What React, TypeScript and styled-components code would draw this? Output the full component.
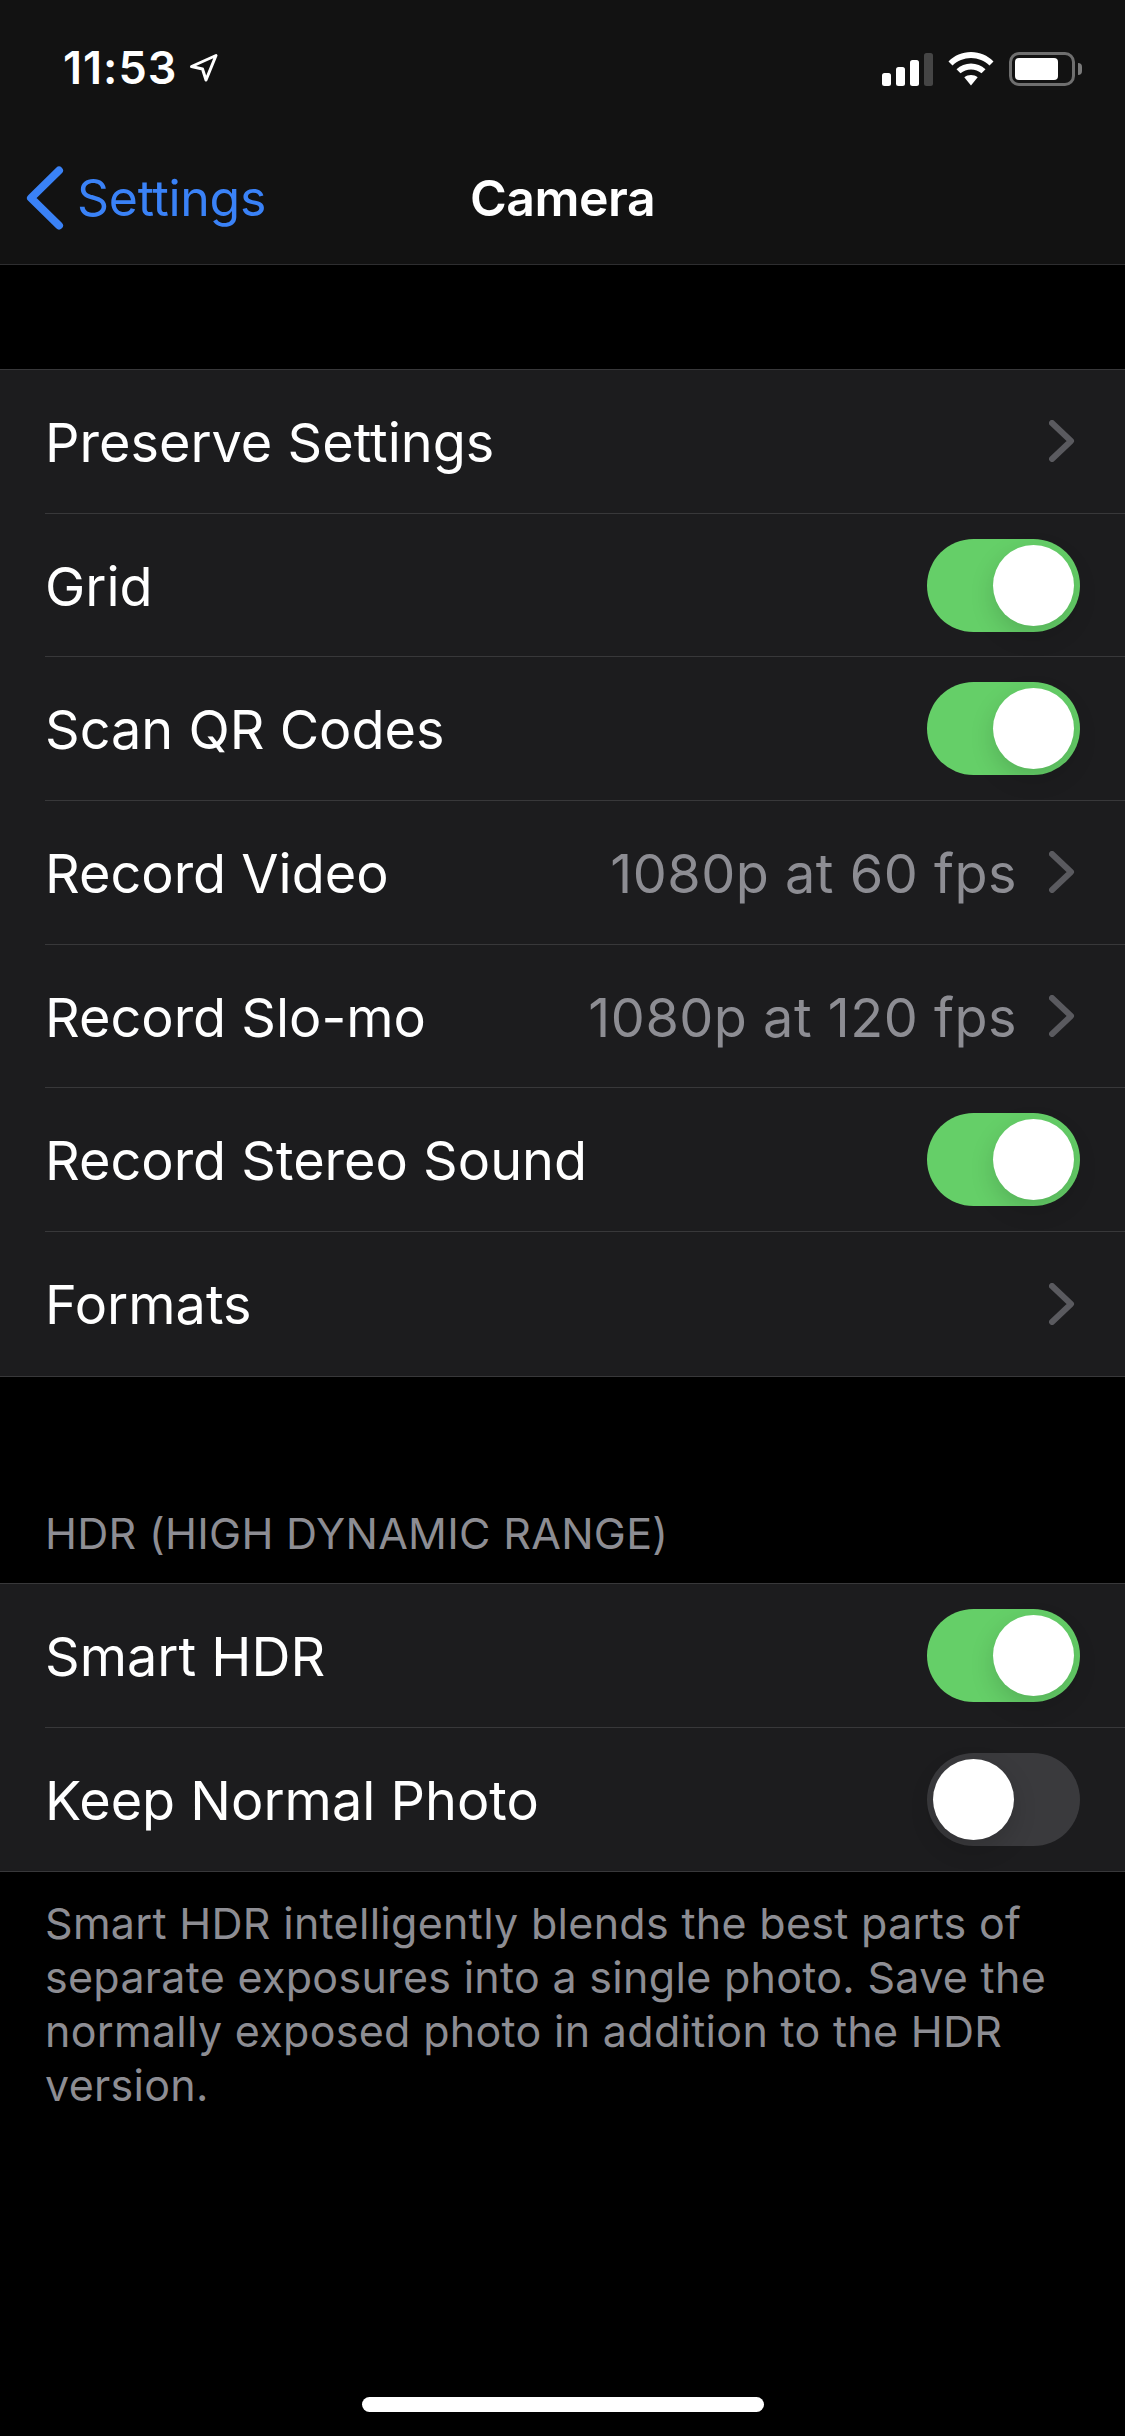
import React from 'react';
import styled, { createGlobalStyle } from 'styled-components';

const GlobalStyle = createGlobalStyle`
  html, body {
    margin: 0;
    padding: 0;
    background: #000;
  }
  * {
    box-sizing: border-box;
  }
`;

const Toggle: React.FC<{ on?: boolean }> = ({ on }) => (
  <Track $on={on}>
    <Knob $on={on} />
  </Track>
);

const Chevron = () => (
  <ChevronIcon width="26" height="42" viewBox="0 0 26 42">
    <path d="M3 3 L22 21 L3 39" fill="none" stroke="#5a5a5f" strokeWidth="6" strokeLinecap="round" strokeLinejoin="round" />
  </ChevronIcon>
);

const Row: React.FC<{ label: string; value?: string; toggle?: 'on' | 'off'; last?: boolean }> = ({ label, value, toggle, last }) => (
  <RowBox>
    <RowInner $last={last}>
      <Label>{label}</Label>
      <Right>
        {value && <Value>{value}</Value>}
        {toggle ? <Toggle on={toggle === 'on'} /> : <Chevron />}
      </Right>
    </RowInner>
  </RowBox>
);

const App: React.FC = () => (
  <Page>
    <GlobalStyle />
    <Header>
      <StatusBar>
        <TimeBox>
          <Time>11:53</Time>
          <svg width="30" height="30" viewBox="0 0 30 30">
            <path d="M2.5 13.5 L27 2.5 L17 27 L13.5 16 Z" fill="none" stroke="#fff" strokeWidth="3" strokeLinejoin="round" />
          </svg>
        </TimeBox>
        <StatusIcons>
          <svg width="51" height="33" viewBox="0 0 51 33">
            <rect x="0" y="20" width="9" height="13" rx="2.5" fill="#fff" />
            <rect x="14" y="14" width="9" height="19" rx="2.5" fill="#fff" />
            <rect x="28" y="7" width="9" height="26" rx="2.5" fill="#fff" />
            <rect x="42" y="0" width="9" height="33" rx="2.5" fill="#454545" />
          </svg>
          <svg width="46" height="34" viewBox="0 0 46 34">
            <path d="M23 0 C14 0 6.500 3.500 0.500 9.500 L4.500 13.500 C9.500 8.800 16 6 23 6 C30 6 36.500 8.800 41.500 13.500 L45.500 9.500 C39.500 3.500 32 0 23 0 Z" fill="#fff" />
            <path d="M23 11.500 C17.500 11.500 12.500 13.700 8.500 17.300 L12.500 21.300 C15.500 18.800 19 17.400 23 17.400 C27 17.400 30.500 18.800 33.500 21.300 L37.500 17.300 C33.500 13.700 28.500 11.500 23 11.500 Z" fill="#fff" />
            <path d="M23 23 C20.500 23 18.200 23.900 16.300 25.300 L23 33.500 L29.700 25.300 C27.800 23.900 25.500 23 23 23 Z" fill="#fff" />
          </svg>
          <Battery>
            <BatteryShell>
              <BatteryFill />
            </BatteryShell>
            <BatteryCap />
          </Battery>
        </StatusIcons>
      </StatusBar>
      <NavBar>
        <BackButton>
          <svg width="40" height="66" viewBox="0 0 40 66">
            <path d="M35 5.500 L7 33 L35 60.500" fill="none" stroke="#3a82f7" strokeWidth="8" strokeLinecap="round" strokeLinejoin="round" />
          </svg>
          <BackLabel>Settings</BackLabel>
        </BackButton>
        <NavTitle>Camera</NavTitle>
      </NavBar>
    </Header>

    <FirstGroup>
      <Row label="Preserve Settings" />
      <Row label="Grid" toggle="on" />
      <Row label="Scan QR Codes" toggle="on" />
      <Row label="Record Video" value="1080p at 60 fps" />
      <Row label="Record Slo-mo" value="1080p at 120 fps" />
      <Row label="Record Stereo Sound" toggle="on" />
      <Row label="Formats" last />
    </FirstGroup>

    <SectionHeader>HDR (HIGH DYNAMIC RANGE)</SectionHeader>
    <Group>
      <Row label="Smart HDR" toggle="on" />
      <Row label="Keep Normal Photo" toggle="off" last />
    </Group>
    <Footer>
      Smart HDR intelligently blends the best parts of separate exposures into a single photo. Save the normally exposed photo in addition to the HDR version.
    </Footer>

    <HomeIndicator />
  </Page>
);

export default App;

// Styled components

const Page = styled.div`
  position: relative;
  width: 1125px;
  height: 2436px;
  background: #000;
  color: #fff;
  font-family: Inter, "Liberation Sans", sans-serif;
  overflow: hidden;
`;

const Header = styled.div`
  height: 265px;
  background: #121212;
  border-bottom: 1px solid #2e2e30;
`;

const StatusBar = styled.div`
  height: 132px;
  padding: 44px 43px 0 63px;
  display: flex;
  justify-content: space-between;
  align-items: flex-start;
`;

const TimeBox = styled.div`
  display: flex;
  align-items: center;
  gap: 12px;
`;

const Time = styled.span`
  font-size: 45px;
  line-height: 48px;
  font-weight: 600;
  letter-spacing: 1px;
`;

const StatusIcons = styled.div`
  display: flex;
  align-items: center;
  gap: 15px;
  padding-top: 8px;
`;

const Battery = styled.div`
  display: flex;
  align-items: center;
  gap: 3px;
`;

const BatteryShell = styled.div`
  width: 66px;
  height: 34px;
  border: 3px solid #6f6f6f;
  border-radius: 10px;
  padding: 3px;
`;

const BatteryFill = styled.div`
  width: 43px;
  height: 22px;
  background: #fff;
  border-radius: 4px;
`;

const BatteryCap = styled.div`
  width: 4px;
  height: 12px;
  background: #7a7a7a;
  border-radius: 0 4px 4px 0;
`;

const NavBar = styled.div`
  position: relative;
  height: 132px;
  display: flex;
  align-items: center;
  justify-content: center;
`;

const BackButton = styled.div`
  position: absolute;
  left: 24px;
  top: 0;
  bottom: 0;
  display: flex;
  align-items: center;
  gap: 13px;
  color: #3a82f7;
`;

const BackLabel = styled.span`
  font-size: 50px;
  letter-spacing: -0.3px;
`;

const NavTitle = styled.span`
  font-size: 50px;
  font-weight: 600;
  letter-spacing: -0.5px;
`;

const Group = styled.div`
  background: #1c1c1e;
  border-top: 1px solid #38383a;
  border-bottom: 1px solid #38383a;
`;

const FirstGroup = styled(Group)`
  margin-top: 104px;
`;

const RowBox = styled.div`
  padding-left: 45px;
`;

const RowInner = styled.div<{ $last?: boolean }>`
  height: 143.700px;
  padding-right: 45px;
  display: flex;
  align-items: center;
  justify-content: space-between;
  border-bottom: ${props => (props.$last ? 'none' : '1px solid #38383a')};
`;

const Label = styled.span`
  font-size: 54px;
  padding-top: 2px;
`;

const Right = styled.div`
  display: flex;
  align-items: center;
  gap: 32px;
`;

const Value = styled.span`
  font-size: 54px;
  letter-spacing: 0.5px;
  padding-top: 2px;
  color: #8d8d93;
`;

const ChevronIcon = styled.svg`
  margin-right: 5px;
`;

const Track = styled.div<{ $on?: boolean }>`
  width: 153px;
  height: 93px;
  border-radius: 47px;
  padding: 6px;
  display: flex;
  justify-content: ${props => (props.$on ? 'flex-end' : 'flex-start')};
  background: ${props => (props.$on ? '#65cf68' : '#3a3a3d')};
`;

const Knob = styled.div<{ $on?: boolean }>`
  width: 81px;
  height: 81px;
  border-radius: 50%;
  background: #fff;
  box-shadow: 0 9px 24px rgba(0, 0, 0, 0.15);
`;

const SectionHeader = styled.div`
  margin-top: 130px;
  height: 76px;
  padding: 2px 45px 0;
  font-size: 43px;
  line-height: 48px;
  letter-spacing: 0.3px;
  color: #8d8d93;
`;

const Footer = styled.div`
  padding: 24px 45px 0;
  font-size: 43px;
  line-height: 54px;
  letter-spacing: 0.3px;
  color: #8d8d93;
`;

const HomeIndicator = styled.div`
  position: absolute;
  left: 362px;
  top: 2397px;
  width: 402px;
  height: 15px;
  border-radius: 8px;
  background: #fff;
`;
